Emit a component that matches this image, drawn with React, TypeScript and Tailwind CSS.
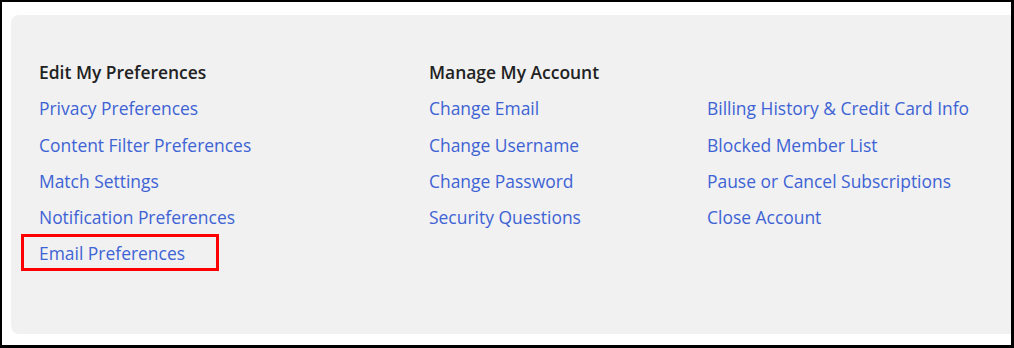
const editPrefs = [
  'Privacy Preferences',
  'Content Filter Preferences',
  'Match Settings',
  'Notification Preferences',
];

const account = ['Change Email', 'Change Username', 'Change Password', 'Security Questions'];

const billing = [
  'Billing History & Credit Card Info',
  'Blocked Member List',
  'Pause or Cancel Subscriptions',
  'Close Account',
];

function LinkItem({ label }: { label: string }) {
  return (
    <li>
      <a href="#" className="text-[#3d63d5] hover:underline">
        {label}
      </a>
    </li>
  );
}

export default function App() {
  return (
    <div className="h-[348px] w-[1014px] overflow-hidden border-t-2 border-l-2 border-r-[3px] border-b-[3px] border-black bg-white">
      <div
        className="ml-[9px] mt-[13px] h-[319px] w-[1020px] rounded-l-lg bg-[#f1f1f1] pl-[28px] pt-[39px] text-[17.45px] leading-[36.25px]"
        style={{ fontFamily: '"Open Sans", "Noto Sans", sans-serif' }}
      >
        <div className="grid grid-cols-[390px_278px_1fr]">
          <div>
            <h2 className="font-semibold text-[#222]">Edit My Preferences</h2>
            <ul>
              {editPrefs.map((l) => (
                <LinkItem key={l} label={l} />
              ))}
              <li className="relative">
                <a href="#" className="text-[#3d63d5] hover:underline">
                  Email Preferences
                </a>
                <span className="pointer-events-none absolute left-[-18px] top-[-1px] h-[37px] w-[198px] border-[3px] border-[#ff0000]" />
              </li>
            </ul>
          </div>
          <div>
            <h2 className="font-semibold text-[#222]">Manage My Account</h2>
            <ul>
              {account.map((l) => (
                <LinkItem key={l} label={l} />
              ))}
            </ul>
          </div>
          <div className="pt-[36.25px]">
            <ul>
              {billing.map((l) => (
                <LinkItem key={l} label={l} />
              ))}
            </ul>
          </div>
        </div>
      </div>
    </div>
  );
}
